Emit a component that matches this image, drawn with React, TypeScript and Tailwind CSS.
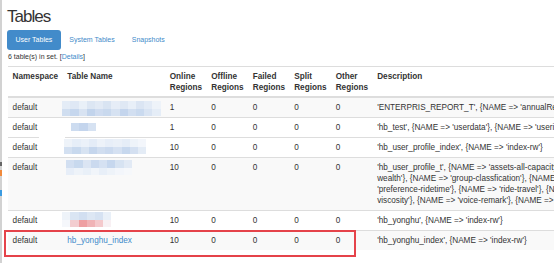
import React from 'react';

type Row = {
  name: React.ReactNode;
  online: string;
  desc: React.ReactNode;
  shaded: boolean;
};

// redaction squares over the table names
const Mosaic = ({ blocks, className }: { blocks: string[][]; className: string }) => (
  <div className={`flex flex-col ${className}`}>
    {blocks.map((line, i) => (
      <div key={i} className="flex">
        {line.map((c, j) => (
          <div key={j} className={`w-[8.2px] h-[7.5px] ${c}`} />
        ))}
      </div>
    ))}
  </div>
);

const rows: Row[] = [
  {
    name: (
      <Mosaic
        className="-ml-[5px] -mt-[1px] -mb-[4px]"
        blocks={[
          ['bg-[#e4ecf6]', 'bg-[#dfe8f5]', 'bg-[#e9f0f8]', 'bg-[#dce6f3]', 'bg-[#e2eaf5]', 'bg-[#d9e4f2]', 'bg-[#e6edf7]', 'bg-[#dfe8f4]', 'bg-[#e8eff8]', 'bg-[#dbe5f3]', 'bg-[#e3ebf6]', 'bg-[#eef3f9]'],
          ['bg-[#d0def0]', 'bg-[#c6d7ee]', 'bg-[#d8e3f2]', 'bg-[#c2d4ec]', 'bg-[#cfdcf0]', 'bg-[#c9d9ee]', 'bg-[#d6e2f2]', 'bg-[#c4d5ed]', 'bg-[#d2dff1]', 'bg-[#cadaef]', 'bg-[#d9e4f3]', 'bg-[#e5edf7]'],
        ]}
      />
    ),
    online: '1',
    desc: "'ENTERPRIS_REPORT_T', {NAME => 'annualReport'}, {NAME => 'baseInfo'}",
    shaded: true,
  },
  {
    name: (
      <Mosaic
        className="ml-[4px] mt-[1px] -mb-[2px]"
        blocks={[['bg-[#cddcf0]', 'bg-[#c4d5ed]', 'bg-[#d6e2f2]']]}
      />
    ),
    online: '1',
    desc: "'hb_test', {NAME => 'userdata'}, {NAME => 'userinfo'}",
    shaded: false,
  },
  {
    name: (
      <>
        <div className="absolute left-[-24px] top-[-11px] w-[26px] h-[26px] bg-white" />
        <Mosaic
          className="relative -ml-[3px] -mt-[3px] -mb-[1px]"
          blocks={[
            ['bg-[#eef3f9]', 'bg-[#e6eef8]', 'bg-[#ebf1f9]', 'bg-[#e4ecf7]', 'bg-[#edf2f9]', 'bg-[#e7eef8]', 'bg-[#eaf0f8]', 'bg-[#e5edf7]', 'bg-[#eef3f9]', 'bg-[#f3f6fb]'],
            ['bg-[#d3e0f1]', 'bg-[#c8d9ee]', 'bg-[#d7e3f2]', 'bg-[#c5d6ed]', 'bg-[#d1def0]', 'bg-[#cbdaef]', 'bg-[#d5e1f2]', 'bg-[#c7d8ee]', 'bg-[#d4e0f1]', 'bg-[#e4ecf6]'],
          ]}
        />
      </>
    ),
    online: '10',
    desc: "'hb_user_profile_index', {NAME => 'index-rw'}",
    shaded: false,
  },
  {
    name: (
      <Mosaic
        className="-ml-[1px] -mt-[2px]"
        blocks={[
          ['bg-[#d2dff1]', 'bg-[#c8d9ee]', 'bg-[#dbe5f3]', 'bg-[#cbdaef]', 'bg-[#d5e1f2]', 'bg-[#c6d7ee]', 'bg-[#d7e3f2]', 'bg-[#e2eaf5]'],
          ['bg-[#e7eef8]', 'bg-[#eef3f9]', 'bg-[#e9f0f8]', 'bg-[#f1f5fa]', 'bg-[#e8eff8]', 'bg-[#eef3f9]', 'bg-[#f3f6fb]', 'bg-[#f6f8fb]'],
        ]}
      />
    ),
    online: '10',
    desc: (
      <>
        'hb_user_profile_t', {'{'}NAME =&gt; 'assets-all-capacity-
        <br />
        wealth'{'}'}, {'{'}NAME =&gt; 'group-classfication'{'}'}, {'{'}NAME =&gt; 'preference-
        <br />
        'preference-ridetime'{'}'}, {'{'}NAME =&gt; 'ride-travel'{'}'}, {'{'}NAME =&gt; 'ride-
        <br />
        viscosity'{'}'}, {'{'}NAME =&gt; 'voice-remark'{'}'}, {'{'}NAME =&gt; 'voice-tone'{'}'}
      </>
    ),
    shaded: true,
  },
  {
    name: (
      <Mosaic
        className="-ml-[5px] -mt-[3px] -mb-[4px]"
        blocks={[
          ['bg-[#eef3f9]', 'bg-[#dae5f3]', 'bg-[#d2dff1]', 'bg-[#dde7f4]', 'bg-[#d6e2f2]', 'bg-[#e9f0f8]'],
          ['bg-[#f5f7fb]', 'bg-[#f3cdd0]', 'bg-[#ee9fa2]', 'bg-[#f0b3b6]', 'bg-[#f4c9cc]', 'bg-[#f8f0f3]'],
        ]}
      />
    ),
    online: '10',
    desc: "'hb_yonghu', {NAME => 'index-rw'}",
    shaded: false,
  },
  {
    name: <span className="text-[#428bca]">hb_yonghu_index</span>,
    online: '10',
    desc: "'hb_yonghu_index', {NAME => 'index-rw'}",
    shaded: true,
  },
];

const headers = ['Namespace', 'Table Name', 'Online Regions', 'Offline Regions', 'Failed Regions', 'Split Regions', 'Other Regions', 'Description'];
const widths = ['w-[55px]', 'w-[104px]', 'w-[40px]', 'w-[41px]', 'w-[42px]', 'w-[41px]', 'w-[41px]', 'w-[420px]'];

const App = () => {
  return (
    <div className="flex w-full h-[263px] overflow-hidden bg-white text-[#333] font-['Liberation_Sans',Arial,sans-serif]">
      <div className="w-[2px] shrink-0 bg-[#d2d2d2] flex flex-col">
        <div className="h-[162px]" />
        <div className="h-[4px] bg-[#666]" />
        <div className="h-[4px]" />
        <div className="h-[6px] bg-[#f08a3c]" />
        <div className="h-[14px]" />
        <div className="h-[6px] bg-[#3c9be0]" />
      </div>
      <div className="flex flex-col pl-[5px] min-w-0 flex-1">
        <h1 className="pt-[7px] text-[17px] leading-[20px] tracking-[-1px] font-normal">Tables</h1>
        <div className="flex items-center mt-[3px] h-[20px] text-[7px]">
          <div className="h-full flex items-center px-[8.5px] rounded-[3px] bg-[#428bca] text-white">User Tables</div>
          <div className="px-[8.5px] text-[#428bca]">System Tables</div>
          <div className="px-[8.5px] text-[#428bca]">Snapshots</div>
        </div>
        <div className="mt-[2px] ml-[1px] text-[7px] leading-[10px]">
          6 table(s) in set. [<span className="text-[#428bca]">Details</span>]
        </div>
        <div className="relative mt-[4px] ml-[1px]">
          <table className="table-fixed border-collapse text-[8.2px] leading-[11px]">
            <thead>
              <tr>
                {headers.map((h, i) => (
                  <th
                    key={h}
                    className={`${widths[i]} text-left align-top font-bold px-[4.6px] pt-[4px] pb-[3px] border-t border-b-2 border-[#dddddd] ${i === 7 ? 'whitespace-nowrap' : ''}`}
                  >
                    {h}
                  </th>
                ))}
              </tr>
            </thead>
            <tbody>
              {rows.map((r, idx) => {
                const cell = 'align-top px-[4.6px] py-[4px] border-t border-[#dddddd]';
                return (
                  <tr key={idx} className={r.shaded ? 'bg-[#f9f9f9]' : 'bg-white'}>
                    <td className={cell}>default</td>
                    <td className={`${cell} relative`}>{r.name}</td>
                    <td className={cell}>{r.online}</td>
                    <td className={cell}>0</td>
                    <td className={cell}>0</td>
                    <td className={cell}>0</td>
                    <td className={cell}>0</td>
                    <td className={`${cell} whitespace-nowrap`}>{r.desc}</td>
                  </tr>
                );
              })}
            </tbody>
          </table>
          <div className="absolute left-[-4px] top-[164px] w-[352px] h-[27px] border-2 border-[#e5434a]" />
        </div>
      </div>
    </div>
  );
};

export default App;
